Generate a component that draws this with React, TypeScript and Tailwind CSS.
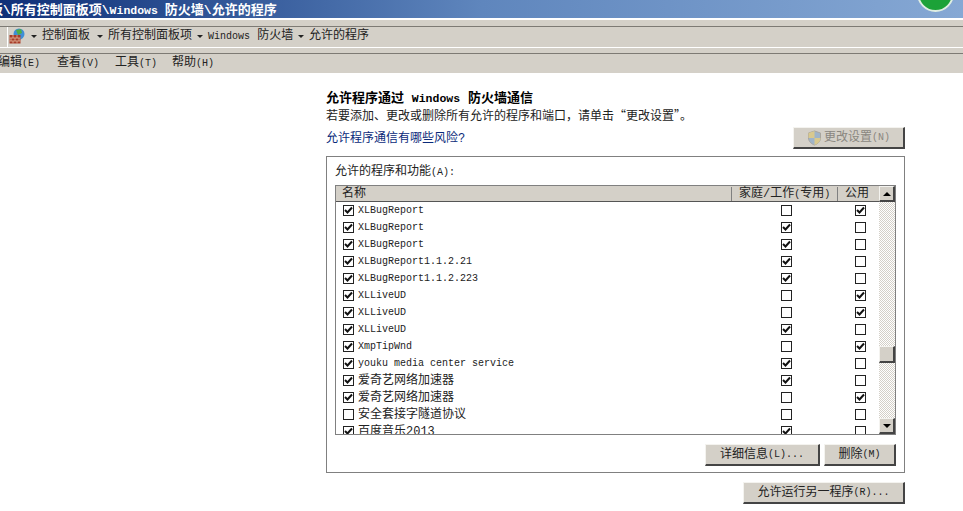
const cjk = "font-['Liberation_Mono','Noto_Sans_CJK_SC',monospace]";

const rows: [string, boolean, boolean, boolean][] = [
  ['XLBugReport', true, false, true],
  ['XLBugReport', true, true, false],
  ['XLBugReport', true, true, false],
  ['XLBugReport1.1.2.21', true, true, false],
  ['XLBugReport1.1.2.223', true, true, false],
  ['XLLiveUD', true, false, true],
  ['XLLiveUD', true, false, true],
  ['XLLiveUD', true, true, false],
  ['XmpTipWnd', true, false, true],
  ['youku media center service', true, true, false],
  ['爱奇艺网络加速器', true, true, false],
  ['爱奇艺网络加速器', true, false, true],
  ['安全套接字隧道协议', false, false, false],
  ['百度音乐2013', true, true, false],
];

function L({ children }: { children: string }) {
  return <span className="text-[10px]">{children}</span>;
}

function H({ children }: { children: string }) {
  return <span className="text-[11.5px]">{children}</span>;
}

function Check({ on }: { on: boolean }) {
  return (
    <span className="flex h-[11px] w-[11px] shrink-0 items-center justify-center border border-[#222] bg-white">
      {on && (
        <svg width="9" height="9" viewBox="0 0 9 9">
          <path d="M1 4 L3.5 6.5 L8 1.5" fill="none" stroke="#111" strokeWidth="2" />
        </svg>
      )}
    </span>
  );
}

function Crumb({ children, w }: { children: React.ReactNode; w: string }) {
  return (
    <div className={`flex items-center ${w}`}>
      <span className="mr-[5px] h-0 w-0 border-x-[3px] border-t-[3px] border-x-transparent border-t-[#222]" />
      <span className="whitespace-nowrap">{children}</span>
    </div>
  );
}

const raised = 'border-t border-l border-t-[#f4f3ef] border-l-[#f4f3ef] border-b-2 border-r-2 border-b-[#444] border-r-[#444] bg-[#d4d0c8]';

function Btn({ w, children, dim }: { w: string; children: React.ReactNode; dim?: boolean }) {
  return (
    <button className={`flex h-[22px] items-center justify-center whitespace-nowrap ${raised} ${w} ${dim ? 'text-[#8a8780]' : 'text-[#222]'}`}>
      {children}
    </button>
  );
}

function ScrollArrow({ up }: { up?: boolean }) {
  return (
    <div className={`flex h-[16px] w-[16px] shrink-0 items-center justify-center ${raised}`}>
      <span className={`h-0 w-0 border-x-[4px] border-x-transparent ${up ? 'border-b-[4px] border-b-black' : 'border-t-[4px] border-t-black'}`} />
    </div>
  );
}

export default function App() {
  return (
    <div className={`h-[511px] w-[963px] overflow-hidden bg-white text-[12px] leading-[14px] text-[#222] ${cjk}`}>
      {/* title bar */}
      <div className="relative h-[18px] overflow-hidden bg-gradient-to-r from-[#0f2f78] via-[#5f86bd] to-[#86a8d4]">
        <div className="-ml-[10px] whitespace-nowrap pt-[4px] text-[13px] font-bold text-white">
          板\所有控制面板项\<H>{'Windows '}</H>防火墙\允许的程序
        </div>
        <div className="absolute left-[917px] top-[-25px] h-[37px] w-[37px] rounded-full border-2 border-[#dfeee2] bg-[#1ca238]" />
      </div>

      {/* address bar */}
      <div className="h-[2px] bg-white" />
      <div className="h-[6px] bg-[#d4d0c8]" />
      <div className="h-[1px] bg-[#7d7a74]" />
      <div className="h-[20px] bg-[#d4d0c8] pl-[7px]">
        <div className="flex h-full items-center border-l border-l-white pb-[2px]">
          <svg width="16" height="16" viewBox="0 0 16 16" className="ml-[1px] shrink-0">
            <circle cx="10" cy="6" r="5.5" fill="#3f8fd6" />
            <path d="M7 2 L12 1 L13 5 L9 7 Z" fill="#4fae45" />
            <rect x="0.5" y="7" width="11" height="8.5" fill="#a83c28" />
            <path d="M0.5 10 H11.5 M0.5 13 H11.5 M4 7 V10 M8 7 V10 M2 10 V13 M6 10 V13 M10 10 V13 M4 13 V15.5 M8 13 V15.5" stroke="#dfb59a" strokeWidth="0.8" />
          </svg>
          <div className="ml-[6px] flex items-center">
            <Crumb w="w-[66px]">控制面板</Crumb>
            <Crumb w="w-[100px]">所有控制面板项</Crumb>
            <Crumb w="w-[101px]"><L>Windows</L> 防火墙</Crumb>
            <Crumb w="w-[80px]">允许的程序</Crumb>
          </div>
        </div>
      </div>
      <div className="h-[1px] bg-white" />
      <div className="h-[5px] bg-[#d4d0c8]" />
      <div className="h-[1px] bg-[#7d7a74]" />

      {/* menu */}
      <div className="flex h-[19px] items-center bg-[#d4d0c8]">
        <div className="-ml-[2px] flex gap-[17px] whitespace-nowrap">
          <span className="w-[42px]">编辑<L>(E)</L></span>
          <span className="w-[41px]">查看<L>(V)</L></span>
          <span className="w-[40px]">工具<L>(T)</L></span>
          <span>帮助<L>(H)</L></span>
        </div>
      </div>

      {/* content */}
      <div className="ml-[326px] w-[579px] pt-[19px]">
        <div className="text-[13px] font-bold leading-[14px] text-black">允许程序通过 <H>Windows</H> 防火墙通信</div>
        <div className="mt-[2px]">
          若要添加、更改或删除所有允许的程序和端口，请单击<span className="font-['Noto_Sans_CJK_SC']">“</span>更改设置<span className="font-['Noto_Sans_CJK_SC']">”</span>。
        </div>
        <div className="mt-[3px] flex items-start justify-between">
          <span className="mt-[5px] text-[#0a2a7a]">允许程序通信有哪些风险?</span>
          <Btn w="w-[112px]" dim>
            <svg width="15" height="16" viewBox="0 0 15 16" className="mr-[2px]">
              <path d="M7.5 1 L13.5 3 V8 C13.5 11.5 10.5 14 7.5 15 C4.5 14 1.5 11.5 1.5 8 V3 Z" fill="#9fb4c9" stroke="#a8a59e" />
              <path d="M7.5 1 V8 H1.5 V3 Z M7.5 8 H13.5 C13.5 11.5 10.5 14 7.5 15 Z" fill="#d9c98e" />
            </svg>
            更改设置 <L>(N)</L>
          </Btn>
        </div>

        <div className="mt-[7px] h-[317px] border border-[#808080] px-[8px] pt-[8px]">
          <div>允许的程序和功能<L>(A):</L></div>
          <div className="mt-[5px] h-[250px] border border-[#808080]">
            <div className="flex h-full">
              <div className="min-w-0 flex-1 overflow-hidden">
                <div className="flex h-[16px] border-b border-b-[#555] bg-[#d4d0c8] pt-[1px] leading-[14px]">
                  <div className="w-[396px] border-r border-r-[#808080] pl-[6px]">名称</div>
                  <div className="w-[106px] whitespace-nowrap border-r border-r-[#808080] pl-[7px]">家庭/工作<L>(</L>专用<L>)</L></div>
                  <div className="flex-1 pl-[7px]">公用</div>
                </div>
                <div>
                  {rows.map((r, i) => (
                    <div key={i} className="flex h-[17px] items-center">
                      <div className="flex w-[396px] items-center gap-[4px] pl-[7px]">
                        <Check on={r[1]} />
                        <span className={`whitespace-nowrap ${/^[\x00-\x7f]+$/.test(r[0]) ? 'text-[10px]' : ''}`}>{r[0]}</span>
                      </div>
                      <div className="flex w-[106px] justify-center pl-[2px]"><Check on={r[2]} /></div>
                      <div className="flex flex-1 justify-center pl-[3px]"><Check on={r[3]} /></div>
                    </div>
                  ))}
                </div>
              </div>
              <div className="flex w-[16px] shrink-0 flex-col bg-[repeating-conic-gradient(#d4d0c8_0_25%,#ffffff_0_50%)] bg-[length:2px_2px]">
                <ScrollArrow up />
                <div className={`mt-[144px] h-[17px] w-[16px] shrink-0 ${raised}`} />
                <div className="flex-1" />
                <ScrollArrow />
              </div>
            </div>
          </div>
          <div className="mt-[9px] flex justify-end gap-[4px]">
            <Btn w="w-[115px]">详细信息<L>(L)...</L></Btn>
            <Btn w="w-[72px]">删除<L>(M)</L></Btn>
          </div>
        </div>

        <div className="mt-[9px] flex justify-end">
          <Btn w="w-[162px]">允许运行另一程序<L>(R)...</L></Btn>
        </div>
      </div>
    </div>
  );
}
